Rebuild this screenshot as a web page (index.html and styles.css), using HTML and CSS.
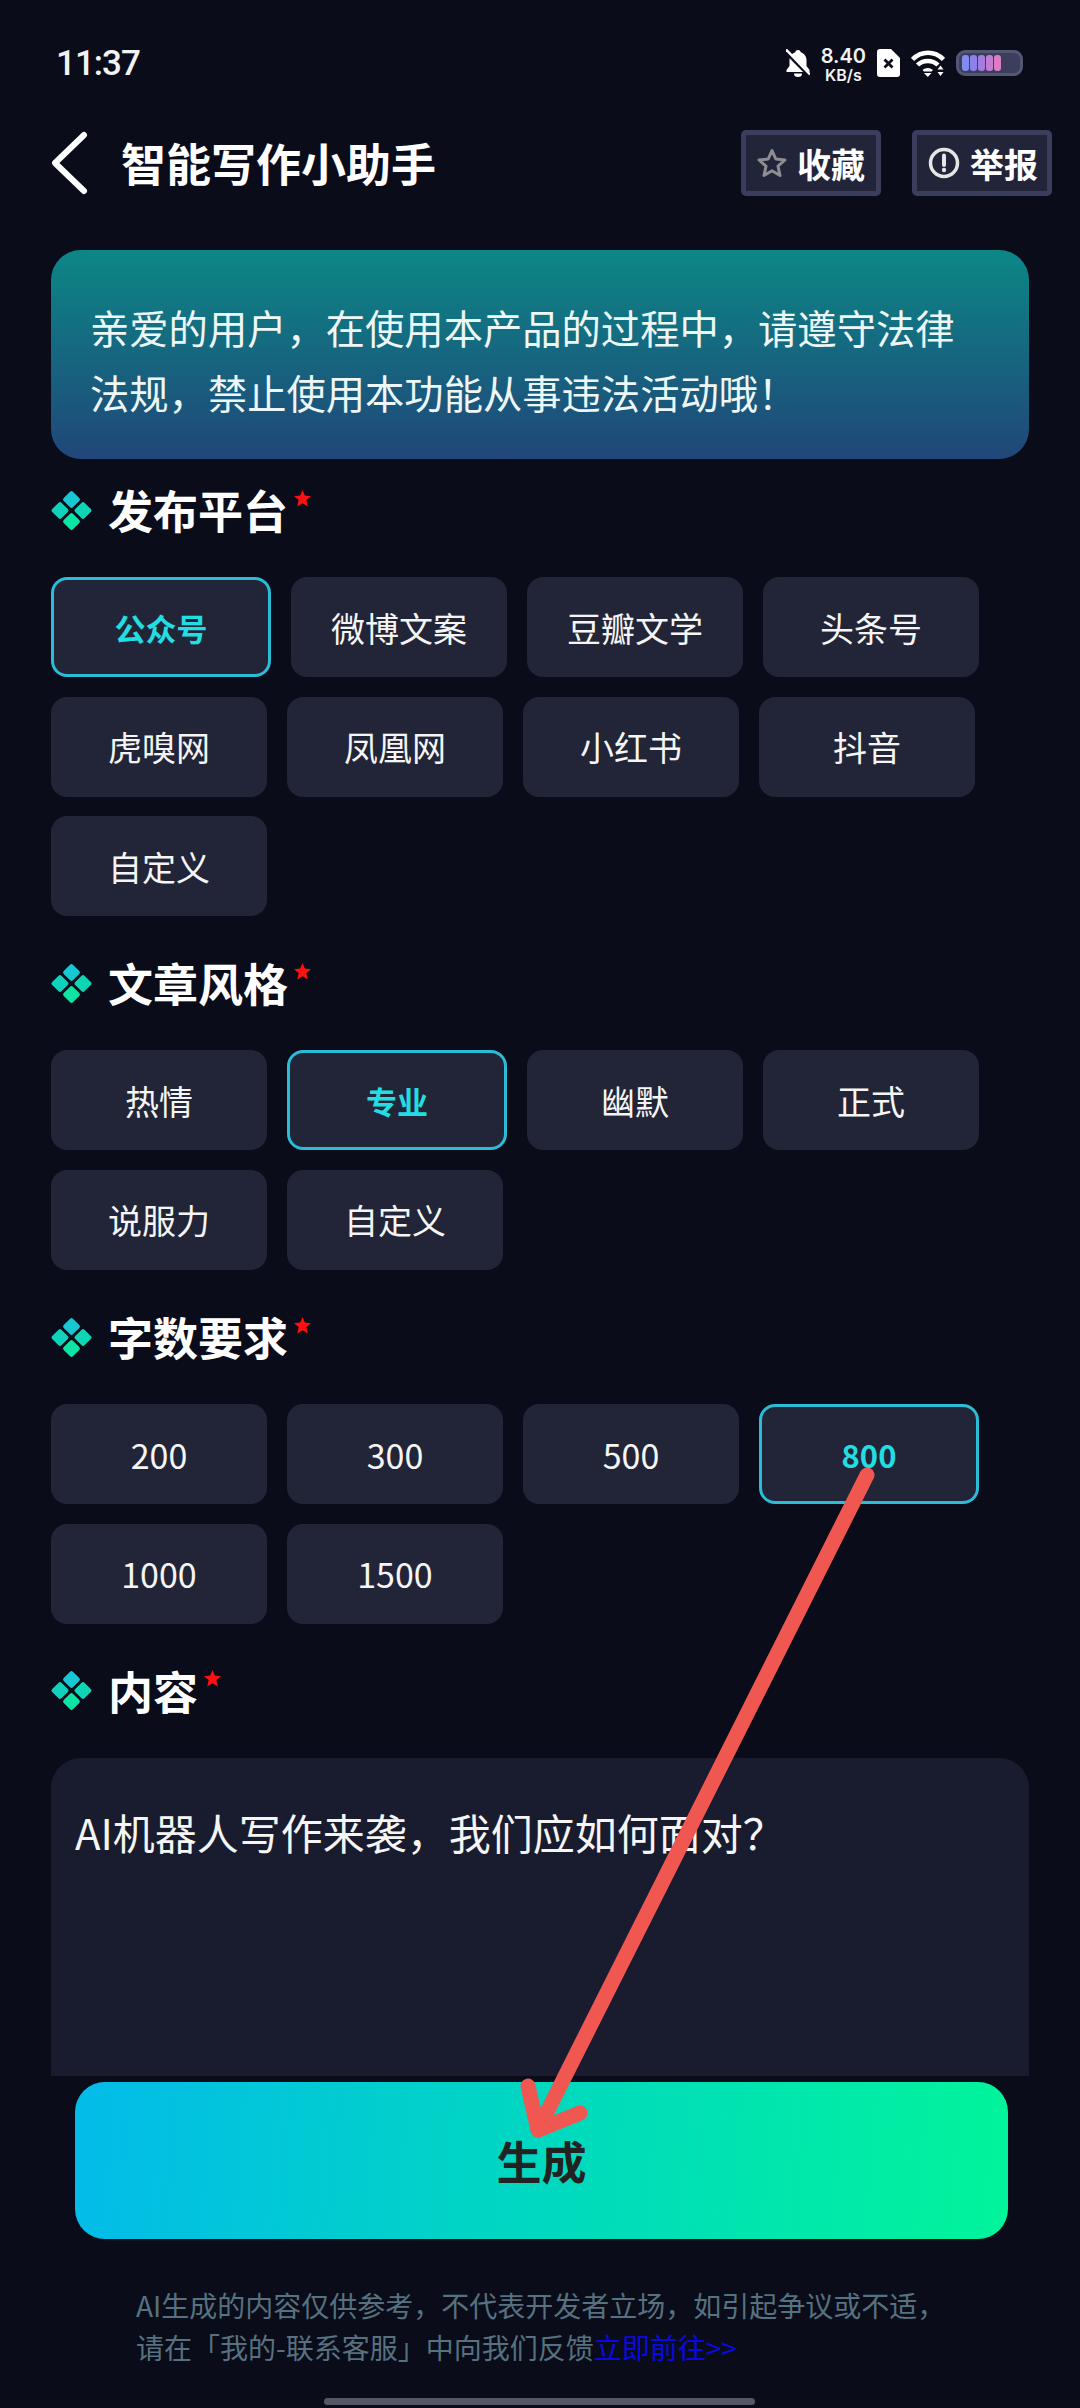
FILE: index.html
```html
<!DOCTYPE html>
<html lang="zh-CN">
  <head>
    <meta charset="UTF-8" />
    <meta name="viewport" content="width=device-width, initial-scale=1.0" />
    <title>智能写作小助手</title>
    <link rel="stylesheet" href="styles.css">
  </head>
  <body>
    <svg class="defs" width="0" height="0">
      <symbol id="diamonds" viewBox="0 0 41 41">
        <rect x="14" y="3" width="13" height="13" rx="2" fill="#17c8d2" transform="rotate(45 20.5 9.5)" />
        <rect x="2.500" y="14" width="13" height="13" rx="2" fill="#10d2bc" transform="rotate(45 9 20.5)" />
        <rect x="25.500" y="14" width="13" height="13" rx="2" fill="#0ed6b4" transform="rotate(45 32 20.5)" />
        <rect x="14" y="25" width="13" height="13" rx="2" fill="#0de3a2" transform="rotate(45 20.5 31.5)" />
      </symbol>
      <symbol id="required" viewBox="0 0 16 16">
        <polygon points="8,0 10.2,5.2 16,5.8 11.6,9.5 13,15.5 8,12.4 3,15.5 4.4,9.5 0,5.8 5.8,5.2" fill="#ff0f0f" />
      </symbol>
    </svg>

    <div class="status-bar">
      <span class="time">11:37</span>
      <div class="status-icons">
        <svg width="24" height="28" viewBox="0 0 24 28">
          <path d="M12 1c-1.500 0-2.500.9-2.700 2.200C5.800 4.300 3.500 7.300 3.500 11v6L.5 21v2h23v-2l-3-4v-6c0-3.700-2.300-6.700-5.800-7.800C14.500 1.900 13.500 1 12 1z" fill="#fff" />
          <path d="M8 24.500a4 3.500 0 0 0 8 0z" fill="#fff" />
          <path d="M0 3l24 24" stroke="#0a0c1a" stroke-width="4" />
          <path d="M0 .5l24 25" stroke="#fff" stroke-width="2.500" />
        </svg>
        <div class="net-speed">
          <span class="net-value">8.40</span>
          <span class="net-unit">KB/s</span>
        </div>
        <svg width="23" height="28" viewBox="0 0 23 28">
          <path d="M3 0h11l9 9v16a3 3 0 0 1-3 3H3a3 3 0 0 1-3-3V3a3 3 0 0 1 3-3z" fill="#fff" />
          <path d="M7.500 10.500l8 8M15.500 10.500l-8 8" stroke="#0a0c1a" stroke-width="2.800" />
        </svg>
        <svg width="34" height="27" viewBox="0 0 34 27">
          <path d="M1.500 9.500C10 .5 24 .5 32.500 9.500" fill="none" stroke="#fff" stroke-width="4.500" />
          <path d="M6.500 15c5.500-5.500 15-5.500 20.500 0" fill="none" stroke="#fff" stroke-width="4.500" />
          <path d="M11.500 20c3-2.800 7.500-2.800 10.500 0l-1.500 1.500h-7.500z" fill="#fff" />
          <path d="M13 23h7.500l-3.700 4z" fill="#fff" />
          <path d="M29.500 14.500l4 5h-8zM25.500 21.500h8l-4 5z" fill="#0a0c1a" />
          <path d="M29.500 15.500l3 4h-6zM26.500 22h6l-3 4z" fill="#fff" />
        </svg>
        <div class="battery">
          <span class="cell cell-1"></span>
          <span class="cell cell-2"></span>
          <span class="cell cell-3"></span>
          <span class="cell cell-4"></span>
          <span class="cell cell-5"></span>
        </div>
      </div>
    </div>

    <header class="app-header">
      <svg class="back" width="36" height="64" viewBox="0 0 36 64">
        <path d="M32 4L3 32l29 28" fill="none" stroke="#fff" stroke-width="6" stroke-linecap="round" stroke-linejoin="round" />
      </svg>
      <h1 class="page-title">智能写作小助手</h1>
      <div class="header-actions">
        <button class="action-btn">
          <svg width="30" height="30" viewBox="0 0 30 30">
            <polygon points="15,2.500 18.800,11 28,12 21,18.200 23,27.500 15,22.700 7,27.500 9,18.200 2,12 11.200,11" fill="none" stroke="#8d8d92" stroke-width="3" stroke-linejoin="round" />
          </svg>
          收藏
        </button>
        <button class="action-btn">
          <svg width="32" height="32" viewBox="0 0 32 32">
            <circle cx="16" cy="16" r="13.500" fill="none" stroke="#e6e6e6" stroke-width="3.500" />
            <path d="M16 8.500v9.500" stroke="#e6e6e6" stroke-width="4" stroke-linecap="round" />
            <circle cx="16" cy="23" r="2.200" fill="#e6e6e6" />
          </svg>
          举报
        </button>
      </div>
    </header>

    <main class="content">
      <div class="notice">亲爱的用户，在使用本产品的过程中，请遵守法律法规，禁止使用本功能从事违法活动哦！</div>

      <section class="section">
        <div class="section-title">
          <svg class="title-mark" width="41" height="41"><use href="#diamonds" /></svg>
          <h2>发布平台</h2>
          <svg class="title-star" width="17" height="17"><use href="#required" /></svg>
        </div>
        <div class="chips">
          <button class="chip active">公众号</button>
          <button class="chip">微博文案</button>
          <button class="chip">豆瓣文学</button>
          <button class="chip">头条号</button>
          <button class="chip">虎嗅网</button>
          <button class="chip">凤凰网</button>
          <button class="chip">小红书</button>
          <button class="chip">抖音</button>
          <button class="chip">自定义</button>
        </div>
      </section>

      <section class="section">
        <div class="section-title">
          <svg class="title-mark" width="41" height="41"><use href="#diamonds" /></svg>
          <h2>文章风格</h2>
          <svg class="title-star" width="17" height="17"><use href="#required" /></svg>
        </div>
        <div class="chips">
          <button class="chip">热情</button>
          <button class="chip active">专业</button>
          <button class="chip">幽默</button>
          <button class="chip">正式</button>
          <button class="chip">说服力</button>
          <button class="chip">自定义</button>
        </div>
      </section>

      <section class="section">
        <div class="section-title">
          <svg class="title-mark" width="41" height="41"><use href="#diamonds" /></svg>
          <h2>字数要求</h2>
          <svg class="title-star" width="17" height="17"><use href="#required" /></svg>
        </div>
        <div class="chips">
          <button class="chip">200</button>
          <button class="chip">300</button>
          <button class="chip">500</button>
          <button class="chip active">800</button>
          <button class="chip">1000</button>
          <button class="chip">1500</button>
        </div>
      </section>

      <section class="section">
        <div class="section-title">
          <svg class="title-mark" width="41" height="41"><use href="#diamonds" /></svg>
          <h2>内容</h2>
          <svg class="title-star" width="17" height="17"><use href="#required" /></svg>
        </div>
        <div class="text-box">AI机器人写作来袭，我们应如何面对？</div>
      </section>
    </main>

    <footer class="bottom">
      <button class="generate">生成</button>
      <p class="disclaimer">AI生成的内容仅供参考，不代表开发者立场，如引起争议或不适，<br />请在「我的-联系客服」中向我们反馈<a href="#">立即前往&gt;&gt;</a></p>
      <div class="home-bar"></div>
    </footer>

    <!-- annotation drawn over the screenshot -->
    <svg class="arrow" width="1080" height="2408" viewBox="0 0 1080 2408">
      <path d="M867 1475L540 2126M528 2086L538 2130L580 2113" fill="none" stroke="#ef5750" stroke-width="15" stroke-linecap="round" stroke-linejoin="round" />
    </svg>
  </body>
</html>
```

FILE: styles.css
```css
:root {
  --bg: #0a0c1a;
  --chip: #222537;
  --accent: #22dde2;
}

* {
  margin: 0;
  padding: 0;
  box-sizing: border-box;
}

html,
body {
  width: 1080px;
  height: 2408px;
  overflow: hidden;
}

body {
  position: relative;
  display: flex;
  flex-direction: column;
  background-color: var(--bg);
  color: #fff;
  font-family: "Noto Sans CJK SC", "Noto Sans", sans-serif;
}

button {
  border: none;
  font-family: inherit;
  color: inherit;
}

.defs {
  position: absolute;
}

/* Status bar */
.status-bar {
  flex: none;
  height: 126px;
  padding: 0 57px 0 56px;
  display: flex;
  justify-content: space-between;
  align-items: center;
}

.time {
  font-family: Roboto, sans-serif;
  font-size: 35px;
  font-weight: 500;
  letter-spacing: -1px;
  color: #f2f2f2;
}

.status-icons {
  display: flex;
  align-items: center;
  gap: 11px;
}

.net-speed {
  padding-top: 3px;
  display: flex;
  flex-direction: column;
  align-items: center;
  font-family: Inter, sans-serif;
  font-weight: 600;
  color: #f2f2f2;
}

.net-value {
  font-size: 20px;
  line-height: 21px;
}

.net-unit {
  font-size: 16px;
  line-height: 17px;
}

.battery {
  width: 67px;
  height: 26px;
  padding: 2px 3px;
  display: flex;
  gap: 1.5px;
  background-color: #3b3e5c;
  border: 3px solid #535772;
  border-radius: 9px;
}

.cell {
  width: 6.500px;
  border-radius: 3px;
}

.cell-1 { background-color: #7f8cf0; }
.cell-2 { background-color: #8c82ea; }
.cell-3 { background-color: #a57de0; }
.cell-4 { background-color: #c27dd6; }
.cell-5 { background-color: #dd7bc4; }

/* Header */
.app-header {
  flex: none;
  height: 74px;
  padding: 0 28px 0 52px;
  display: flex;
  align-items: center;
}

.page-title {
  margin-left: 33px;
  font-size: 45px;
  font-weight: 700;
  line-height: 60px;
}

.header-actions {
  margin-left: auto;
  display: flex;
  gap: 31px;
}

.action-btn {
  width: 140px;
  height: 66px;
  padding-left: 11px;
  display: flex;
  align-items: center;
  gap: 10px;
  background-color: #22253a;
  border: 5px solid #3a3d5c;
  border-radius: 5px;
  font-size: 34px;
  font-weight: 700;
}

/* Form */
.content {
  flex: 1;
  min-height: 0;
  overflow: hidden;
  padding: 50px 51px 0;
}

.notice {
  height: 209px;
  margin-bottom: 21px;
  padding: 44px 50px 0 39px;
  background: linear-gradient(180deg, #0c8786 0%, #204679 100%);
  border-radius: 30px;
  font-size: 39.300px;
  line-height: 65px;
  color: #eef7f7;
}

.section + .section {
  margin-top: 37.300px;
}

.section-title {
  height: 60px;
  margin-bottom: 37px;
  display: flex;
  align-items: center;
}

.section-title h2 {
  margin-left: 16px;
  font-size: 45px;
  font-weight: 700;
  line-height: 60px;
}

.title-star {
  margin: -24px 0 0 6px;
}

.chips {
  display: flex;
  flex-wrap: wrap;
  gap: 19.500px 20px;
}

.chip {
  width: 216px;
  height: 100px;
  background-color: var(--chip);
  border-radius: 16px;
  font-size: 34px;
  color: #f5f5f5;
}

.chip.active {
  width: 220px;
  border: 3px solid #2bbcd8;
  font-size: 31px;
  font-weight: 700;
  color: var(--accent);
}

.text-box {
  height: 400px;
  padding: 47px 24px;
  background-color: #191c2e;
  border-radius: 30px;
  font-size: 42px;
  line-height: 54px;
  color: #f5f5f5;
}

/* Bottom */
.bottom {
  flex: none;
  height: 332px;
  padding-top: 6px;
}

.generate {
  display: block;
  width: 933px;
  height: 157px;
  margin-left: 75px;
  background: linear-gradient(95deg, #03bbe9 0%, #00d8c0 50%, #01f49a 100%);
  border-radius: 30px;
  font-size: 45px;
  font-weight: 700;
  color: #222;
}

.disclaimer {
  margin-top: 45px;
  padding-left: 136px;
  font-size: 28px;
  line-height: 42px;
  color: #56717f;
}

.disclaimer a {
  color: #0a0ae0;
  text-decoration: none;
}

.home-bar {
  width: 431px;
  height: 7px;
  margin: 30px 0 0 324px;
  background-color: #555766;
  border-radius: 4px;
}

.arrow {
  position: absolute;
  top: 0;
  left: 0;
  pointer-events: none;
}
```
